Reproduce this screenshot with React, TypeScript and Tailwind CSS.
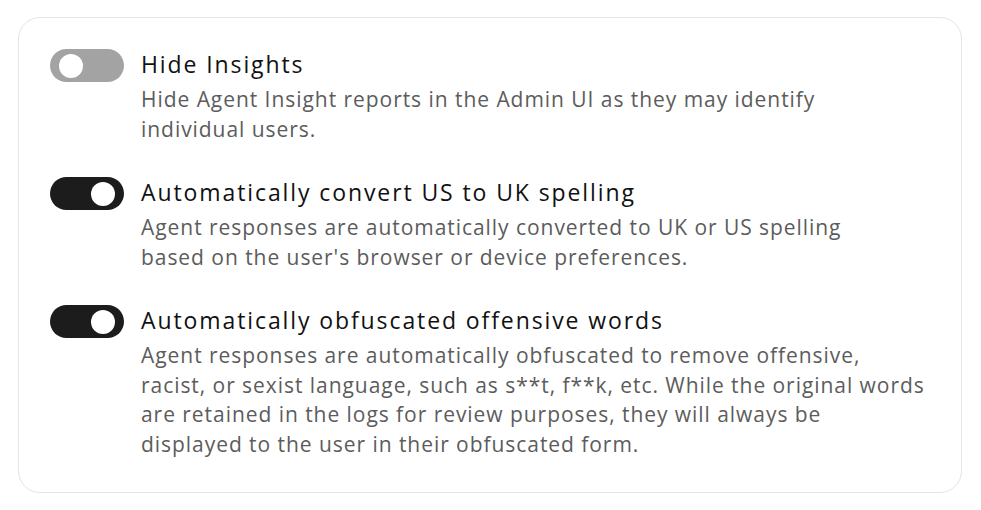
import React, { useState } from 'react';

type Setting = {
    id: string;
    title: string;
    lines: string[];
    enabled: boolean;
};

const initialSettings: Setting[] = [
    {
        id: 'hide-insights',
        title: 'Hide Insights',
        lines: ['Hide Agent Insight reports in the Admin UI as they may identify', 'individual users.'],
        enabled: false,
    },
    {
        id: 'uk-spelling',
        title: 'Automatically convert US to UK spelling',
        lines: [
            'Agent responses are automatically converted to UK or US spelling',
            "based on the user's browser or device preferences.",
        ],
        enabled: true,
    },
    {
        id: 'obfuscate',
        title: 'Automatically obfuscated offensive words',
        lines: [
            'Agent responses are automatically obfuscated to remove offensive,',
            'racist, or sexist language, such as s**t, f**k, etc. While the original words',
            'are retained in the logs for review purposes, they will always be',
            'displayed to the user in their obfuscated form.',
        ],
        enabled: true,
    },
];

const Toggle: React.FC<{ on: boolean; onClick: () => void }> = ({ on, onClick }) => (
    <button
        type="button"
        onClick={onClick}
        className={`flex h-[33px] w-[74px] shrink-0 items-center rounded-full px-[9px] ${on ? 'bg-[#1c1c1c] justify-end' : 'bg-[#a3a3a3] justify-start'}`}
    >
        <span className="block h-[24px] w-[24px] rounded-full bg-white" />
    </button>
);

export default function App() {
    const [settings, setSettings] = useState(initialSettings);

    const flip = (id: string) =>
        setSettings(s => s.map(x => (x.id === id ? { ...x, enabled: !x.enabled } : x)));

    return (
        <div className="min-h-[510px] bg-white pl-[18px] pt-[17px] font-['Open_Sans',sans-serif]">
            <div className="flex w-[944px] flex-col gap-[33px] rounded-[22px] border border-[#e4e4e4] bg-white pb-[33px] pl-[31px] pt-[31px]">
                {settings.map(s => (
                    <div key={s.id} className="flex items-start gap-[17px]">
                        <Toggle on={s.enabled} onClick={() => flip(s.id)} />
                        <div className="flex flex-col gap-[4px]">
                            <h3 className="whitespace-nowrap text-[23px] font-medium leading-[30px] tracking-[1.9px] text-[#111111]">{s.title}</h3>
                            <p className="mt-[2px] whitespace-nowrap text-[21px] font-normal leading-[29.5px] tracking-[0.95px] text-[#5c5c5c]">
                                {s.lines.map((l, i) => (
                                    <React.Fragment key={i}>
                                        {l}
                                        {i < s.lines.length - 1 && <br />}
                                    </React.Fragment>
                                ))}
                            </p>
                        </div>
                    </div>
                ))}
            </div>
        </div>
    );
}
